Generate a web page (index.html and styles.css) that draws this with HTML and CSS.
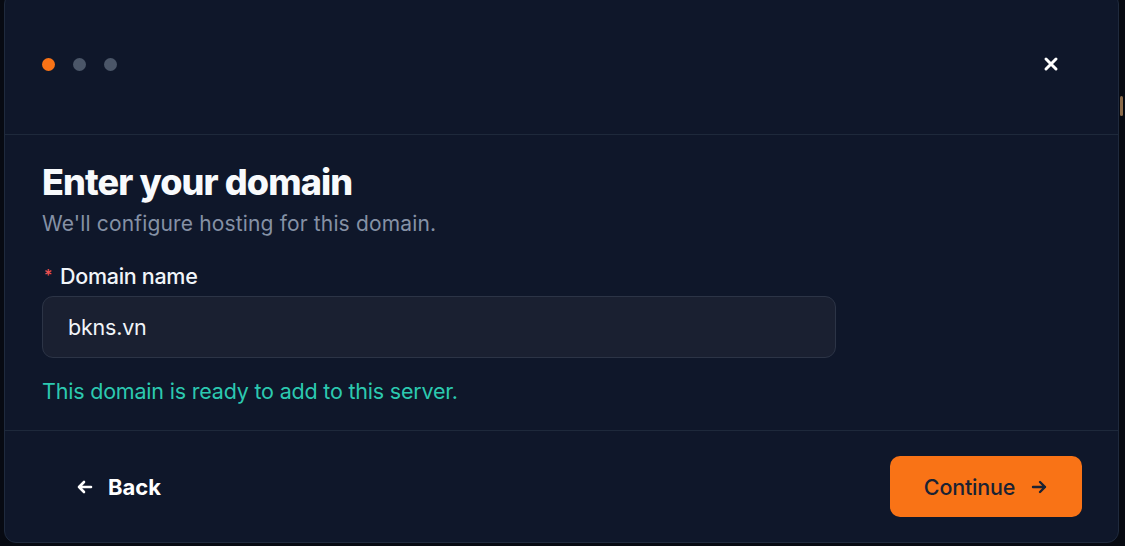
FILE: index.html
```html
<!DOCTYPE html>
<html lang="en">
<head>
<meta charset="utf-8">
<title>Enter your domain</title>
<link rel="stylesheet" href="styles.css">
</head>
<body>
<div class="backdrop">
  <span class="edge-mark"></span>
  <div class="modal">
    <header class="modal-head">
      <div class="steps">
        <span class="dot active"></span>
        <span class="dot"></span>
        <span class="dot"></span>
      </div>
      <button class="close" aria-label="Close">
        <svg width="16" height="16" viewBox="0 0 16 16"><path d="M3 3L13 13M13 3L3 13" stroke="#ffffff" stroke-width="3" stroke-linecap="round"/></svg>
      </button>
    </header>
    <section class="modal-body">
      <h1 class="title">Enter your domain</h1>
      <p class="subtitle">We'll configure hosting for this domain.</p>
      <label class="label"><span class="req">*</span><span>Domain name</span></label>
      <div class="input">bkns.vn</div>
      <p class="ok">This domain is ready to add to this server.</p>
    </section>
    <footer class="modal-foot">
      <button class="back">
        <svg width="18" height="18" viewBox="0 0 18 18"><path d="M15 9H3M8 4L3 9L8 14" fill="none" stroke="#ffffff" stroke-width="2.6" stroke-linecap="round" stroke-linejoin="round"/></svg>
        <span>Back</span>
      </button>
      <button class="continue">
        <span>Continue</span>
        <svg width="18" height="18" viewBox="0 0 18 18"><path d="M3 9H15M10 4L15 9L10 14" fill="none" stroke="#1a2233" stroke-width="2.4" stroke-linecap="round" stroke-linejoin="round"/></svg>
      </button>
    </footer>
  </div>
</div>
</body>
</html>
```

FILE: styles.css
```css
* { box-sizing: border-box; }
html, body {
  margin: 0;
  padding: 0;
  height: 100%;
  background: #070a12;
  font-family: Inter, "Noto Sans", sans-serif;
  overflow: hidden;
}
.backdrop {
  position: relative;
  height: 546px;
  padding: 0 6px 0 4px;
}
.edge-mark {
  position: absolute;
  right: 2px;
  top: 104px;
  width: 3px;
  height: 20px;
  border-radius: 2px;
  background: #8a6a4a;
}
.modal {
  margin-top: -8px;
  height: 551px;
  background: #0f172a;
  border: 1px solid #1f2a3d;
  border-radius: 12px;
  display: flex;
  flex-direction: column;
}
.modal-head {
  height: 142px;
  flex: none;
  display: flex;
  align-items: center;
  justify-content: space-between;
  padding: 0 59px 0 37px;
  border-bottom: 1px solid #1e293b;
}
.steps {
  display: flex;
  gap: 18px;
  padding-top: 2px;
}
.dot {
  width: 13px;
  height: 13px;
  border-radius: 50%;
  background: #4b5668;
}
.dot.active { background: #f97316; }
.close {
  background: none;
  border: 0;
  padding: 0;
  width: 16px;
  height: 16px;
  display: flex;
}
.modal-body {
  flex: none;
  height: 296px;
  padding: 26px 37px 0;
  border-bottom: 1px solid #1e293b;
}
.title {
  margin: 0;
  color: #f8fafc;
  font-size: 36px;
  font-weight: 800;
  letter-spacing: -0.9px;
  line-height: 42px;
}
.subtitle {
  margin: 6px 0 0;
  color: #8591a5;
  font-size: 21px;
  letter-spacing: 0.15px;
  line-height: 30px;
}
.label {
  display: flex;
  align-items: baseline;
  gap: 8px;
  margin-top: 25px;
  color: #f1f5f9;
  font-size: 21.5px;
  font-weight: 500;
  letter-spacing: -0.3px;
  line-height: 24px;
}
.req { color: #f05252; font-size: 16px; position: relative; top: -3px; padding-left: 2px; }
.input {
  margin-top: 6px;
  width: 794px;
  height: 62px;
  background: #1a2031;
  border: 1.5px solid #2c3446;
  border-radius: 11px;
  padding: 0 25px;
  display: flex;
  align-items: center;
  color: #f1f5f9;
  font-size: 21.5px;
  letter-spacing: -0.2px;
}
.ok {
  margin: 19px 0 0;
  color: #2cc9b0;
  font-size: 21.5px;
  letter-spacing: -0.2px;
  line-height: 28px;
}
.modal-foot {
  flex: 1;
  display: flex;
  align-items: center;
  justify-content: space-between;
  padding: 0 36px 0 71px;
}
.back {
  background: none;
  border: 0;
  padding: 0;
  display: flex;
  align-items: center;
  gap: 14px;
  color: #ffffff;
  font-family: inherit;
  font-size: 22px;
  font-weight: 700;
}
.continue {
  width: 192px;
  height: 61px;
  border: 0;
  border-radius: 10px;
  background: #f97316;
  color: #1a2233;
  font-family: inherit;
  font-size: 21.5px;
  font-weight: 500;
  letter-spacing: -0.2px;
  display: flex;
  align-items: center;
  justify-content: center;
  gap: 15px;
  padding: 0;
}
```
